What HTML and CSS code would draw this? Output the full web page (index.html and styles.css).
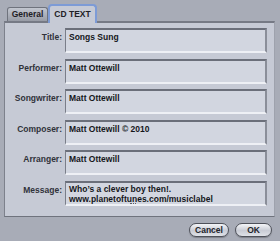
FILE: index.html
```html
<!DOCTYPE html>
<html lang="en">
<head>
<meta charset="UTF-8" />
<title>CD TEXT</title>
<link rel="stylesheet" href="styles.css">
</head>
<body>
  <div class="dialog">
    <div class="tabs">
      <div class="tab">General</div>
      <div class="tab selected">CD TEXT</div>
    </div>
    <div class="panel">
      <div class="row">
        <label class="label">Title:</label>
        <div class="field">Songs Sung</div>
      </div>
      <div class="row">
        <label class="label">Performer:</label>
        <div class="field">Matt Ottewill</div>
      </div>
      <div class="row">
        <label class="label">Songwriter:</label>
        <div class="field">Matt Ottewill</div>
      </div>
      <div class="row">
        <label class="label">Composer:</label>
        <div class="field">Matt Ottewill &copy; 2010</div>
      </div>
      <div class="row">
        <label class="label">Arranger:</label>
        <div class="field">Matt Ottewill</div>
      </div>
      <div class="row">
        <label class="label">Message:</label>
        <div class="field message">Who’s a clever boy then!.<br>www.planetoftunes.com/musiclabel<span class="more"></span></div>
      </div>
    </div>
    <div class="buttons">
      <button class="btn">Cancel</button>
      <button class="btn">OK</button>
    </div>
  </div>
</body>
</html>
```
FILE: styles.css
```css
body {
  margin: 0;
  background: #a8acb7;
  font-family: "Liberation Sans", Arial, sans-serif;
  font-weight: bold;
  font-size: 8.5px;
  color: #262830;
}
.dialog {
  width: 280px;
  height: 241px;
  padding: 4px 0 0 4px;
  box-sizing: border-box;
}
.tabs {
  display: flex;
  align-items: flex-end;
  height: 17px;
  padding-left: 3px;
}
.tab {
  width: 41px;
  height: 14px;
  line-height: 13px;
  text-align: center;
  color: #1e2026;
  background: linear-gradient(#c2c6cf, #989ca6);
  border: 1px solid #6f737d;
  border-bottom: none;
  border-radius: 3px 3px 0 0;
  box-sizing: border-box;
}
.tab.selected {
  width: 49px;
  height: 19px;
  line-height: 16px;
  margin-bottom: -2px;
  background: #c6cad5;
  border: 2px solid #7d9bd6;
  border-bottom: none;
  border-radius: 4px 4px 0 0;
  position: relative;
  z-index: 1;
}
.panel {
  width: 271px;
  height: 196px;
  box-sizing: border-box;
  background: #c6cad5;
  border-top: 2px solid #767a85;
  border-left: 1px solid #7d818c;
  border-right: 1px solid #9ea2ad;
  border-bottom: 1px solid #6f737d;
  padding: 5px 0 0 0;
  display: flex;
  flex-direction: column;
  gap: 5.6px;
}
.row {
  display: flex;
  gap: 3px;
}
.label {
  width: 57px;
  text-align: right;
  padding-top: 4px;
  line-height: 10px;
  color: #30323a;
}
.field {
  width: 202px;
  height: 25px;
  box-sizing: border-box;
  background: #d2d6e0;
  border-top: 2px solid #6b6f7a;
  border-left: 1px solid #7a7e89;
  border-right: 2px solid #8a8e99;
  border-bottom: 2px solid #eef0f5;
  padding: 2px 3px;
  line-height: 10px;
  color: #15161b;
}
.message {
  position: relative;
  padding-top: 1px;
}
.more {
  position: absolute;
  left: 64px;
  bottom: 0;
  width: 6px;
  border-top: 1px dotted #5c5f69;
}
.buttons {
  display: flex;
  justify-content: flex-end;
  gap: 6px;
  padding-right: 8px;
  margin-top: 6px;
}
.btn {
  height: 14px;
  padding: 0;
  font-family: "Liberation Sans", Arial, sans-serif;
  font-weight: bold;
  font-size: 8.5px;
  color: #22242b;
  background: linear-gradient(#f4f5f8, #c9ccd5 55%, #dfe2e8);
  border: 1px solid #4e515a;
  border-radius: 7px;
  box-shadow: 0 1px 1px rgba(0,0,0,0.25);
}
.btn:first-child {
  width: 40px;
}
.btn:last-child {
  width: 37px;
}
```
